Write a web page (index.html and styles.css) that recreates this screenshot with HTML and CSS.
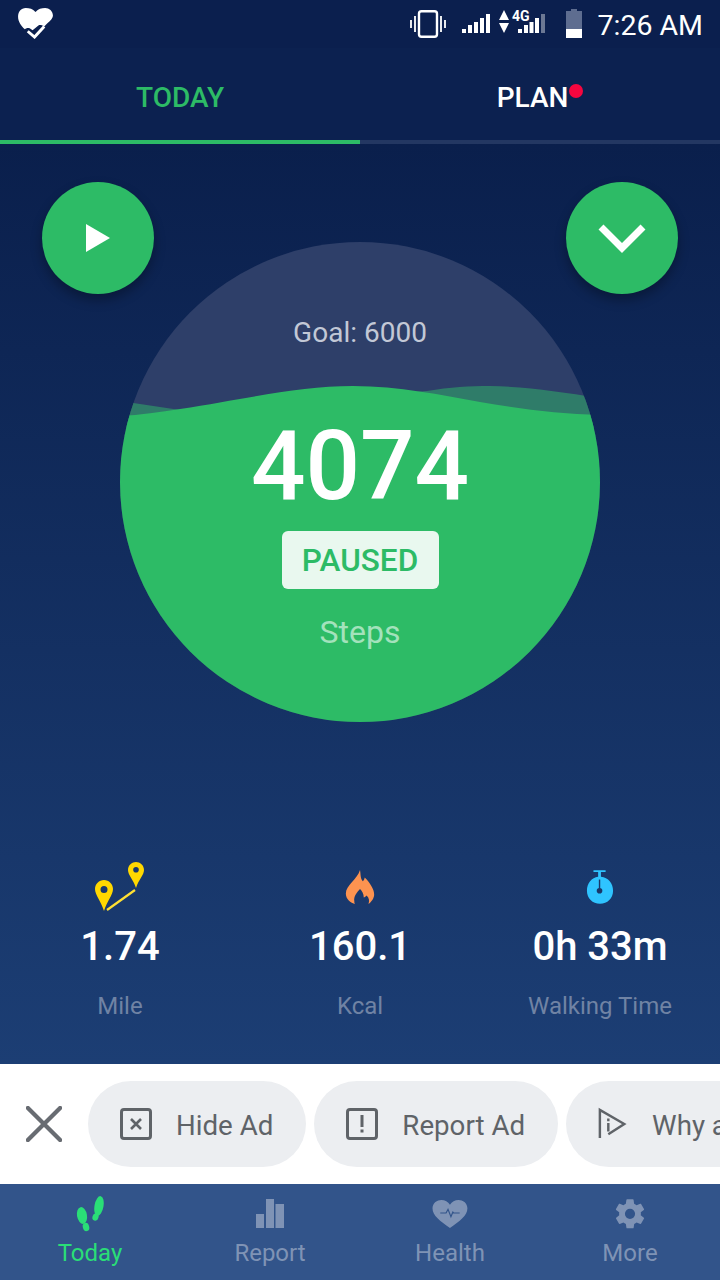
FILE: index.html
```html
<!DOCTYPE html>
<html lang="en">
<head>
<meta charset="utf-8">
<title>Today</title>
<link rel="stylesheet" href="styles.css">
</head>
<body>
<div class="app">
  <header class="status">
    <svg class="st-heart" viewBox="0 0 36 32"><path fill="#fff" d="M18 4C15 1 12 0 8 0 3 0 0 4 0 9c0 5 3 9 7 13 1-1 3-2 5-1l3 2 6-5c2-1 4 0 6 1l3-3C34 13 36 10 36 8 36 3 32 0 28 0 24 0 21 1 18 4z"/><path fill="none" stroke="#fff" stroke-width="3" d="M10 24l7 6 10-11"/></svg>
    <div class="st-right">
      <svg class="st-vib" viewBox="0 0 36 28"><rect x="9" y="1.200" width="18" height="25.600" rx="2.500" fill="none" stroke="#fff" stroke-width="2.400"/><path stroke="#fff" stroke-width="1.800" d="M5 6v16M1 10v8M31 6v16M35 10v8"/></svg>
      <svg class="st-sig" viewBox="0 0 28 19"><path fill="#fff" d="M0 15h4v4H0zM6 11h4v8H6zM12 8h4v11h-4zM18 4h4v15h-4zM24 0h4v19h-4z"/></svg>
      <svg class="st-net" viewBox="0 0 47 25"><path fill="#fff" d="M5 1l5 10H0zM0 14h10L5 24z"/><path fill="#fff" d="M19 20h4v4h-4zM25 16h4v8h-4zM30.500 13h4v11h-4z"/><path fill="#fff" d="M36 9h4v15h-4z"/><path fill="#fff" opacity=".4" d="M42 5h4v19h-4z"/><text class="st-4g" x="13" y="12">4G</text></svg>
      <svg class="st-bat" viewBox="0 0 16 29"><path fill="#5e6d90" d="M5 0h6v2h5v18H0V2h5z"/><rect y="20" width="16" height="9" fill="#fff"/></svg>
      <span class="st-time">7:26 AM</span>
    </div>
  </header>

  <nav class="tabs">
    <div class="tab tab-on"><span>TODAY</span></div>
    <div class="tab"><span class="plan">PLAN<i class="dot"></i></span></div>
  </nav>

  <main class="main">
    <div class="fabs">
      <button class="fab"><svg class="fab-play" viewBox="0 0 24 28"><path fill="#fff" d="M0 0l24 14L0 28z"/></svg></button>
      <button class="fab"><svg class="fab-down" viewBox="0 0 48 30"><path fill="none" stroke="#fff" stroke-width="7" d="M3 4l21 21L45 4"/></svg></button>
    </div>

    <section class="ring">
      <svg class="waves" viewBox="120 242 480 480">
        <path fill="#2f7c69" d="M120 401L180 410 427 391C450 387 470 386 490 386 530 387 560 392 600 398V430H120z"/>
        <path fill="#2dbb66" d="M120 416C140 415 160 412 180 409 250 398 300 386 353 386 400 386 440 395 480 402 520 409 560 414 600 415V722H120z"/>
      </svg>
      <p class="goal">Goal: 6000</p>
      <p class="count">4074</p>
      <span class="paused">PAUSED</span>
      <p class="steps">Steps</p>
    </section>

    <section class="stats">
      <div class="stat">
        <svg class="stat-ico" viewBox="-4 0 60 52"><path fill="#ffd800" fill-rule="evenodd" d="M10 18c5 0 9 4 9 9 0 6-6 12-9 22C7 39 1 33 1 27c0-5 4-9 9-9zm0 6a3.500 3.500 0 100 7 3.500 3.500 0 000-7z"/><path fill="#ffd800" fill-rule="evenodd" d="M42 0c4 0 8 3 8 8 0 5-5 9-8 18-3-9-8-13-8-18 0-5 4-8 8-8zm0 5a2.800 2.800 0 100 5.600A2.800 2.800 0 0042 5z"/><path stroke="#ffe033" stroke-width="2.200" d="M13 48l28-20"/></svg>
        <strong>1.74</strong><span>Mile</span>
      </div>
      <div class="stat">
        <svg class="stat-ico flame" viewBox="0 0 32 36"><path fill="#fd9350" d="M16 0c1 5 0 8 3 12 1-1 2-3 2-4 5 5 10 12 10 18 0 4-3 8-6 10 1-3 1-6-2-9-1 1-2 2-3 2 0-4-2-7-4-9-3 3-7 8-6 13 0 1 0 2 1 3-5-1-10-5-10-11C1 16 13 10 16 0z"/></svg>
        <strong>160.1</strong><span>Kcal</span>
      </div>
      <div class="stat">
        <svg class="stat-ico timer" viewBox="0 0 30 36"><path fill="#2fc4ff" d="M8 0h13v2h-5v5c8 1 13 7 13 15 0 8-6 14-14 14S1 30 1 22C1 14 6 8 13 7V2H8z"/><circle cx="14.500" cy="22" r="3" fill="#1a3768"/><path stroke="#1a3768" stroke-width="1.500" d="M14.500 10v12"/></svg>
        <strong>0h 33m</strong><span>Walking Time</span>
      </div>
    </section>
  </main>

  <aside class="ad">
    <svg class="ad-x" viewBox="0 0 38 38"><path stroke="#686c72" stroke-width="4.500" stroke-linecap="round" d="M2 2l34 34M36 2L2 36"/></svg>
    <div class="pill">
      <svg class="pill-ico" viewBox="0 0 32 32"><rect x="1.500" y="1.500" width="29" height="29" rx="2.500" fill="none" stroke="#5f6368" stroke-width="3"/><path stroke="#5f6368" stroke-width="2.600" d="M11 11l10 10M21 11L11 21"/></svg>
      <span>Hide Ad</span>
    </div>
    <div class="pill">
      <svg class="pill-ico" viewBox="0 0 32 32"><rect x="1.500" y="1.500" width="29" height="29" rx="2.500" fill="none" stroke="#5f6368" stroke-width="3"/><path fill="#5f6368" d="M14.500 7h3v12h-3zM14.500 21.500h3v3h-3z"/></svg>
      <span>Report Ad</span>
    </div>
    <div class="pill pill-cut">
      <svg class="pill-ico why" viewBox="0 0 32 34"><path fill="none" stroke="#5f6368" stroke-width="2.600" d="M2 32V2l26 15-17 11"/><path stroke="#5f6368" stroke-width="2.600" d="M11 16v9M11 11v3"/></svg>
      <span>Why a</span>
    </div>
  </aside>

  <footer class="nav">
    <div class="nav-item nav-on">
      <svg class="nav-ico" viewBox="0 0 36 36"><g fill="#2ade77"><ellipse cx="10" cy="19.500" rx="5" ry="8.500" transform="rotate(-10 10 19.500)"/><ellipse cx="14" cy="31" rx="3.200" ry="4.200" transform="rotate(-15 14 31)"/><ellipse cx="27" cy="10" rx="4.500" ry="10" transform="rotate(10 27 10)"/><ellipse cx="23.500" cy="21" rx="3" ry="3.800" transform="rotate(18 23.500 21)"/></g></svg>
      <span>Today</span>
    </div>
    <div class="nav-item">
      <svg class="nav-ico" viewBox="0 0 36 36"><path fill="#7f93b5" d="M4 18h8v14H4zM14 3h8v29h-8zM23.500 8H32v24h-8.500z"/></svg>
      <span>Report</span>
    </div>
    <div class="nav-item">
      <svg class="nav-ico" viewBox="0 0 36 36"><g transform="translate(.5 4) scale(.97 .93)"><path fill="#7f93b5" d="M18 30C8 23 0 17 0 9 0 3 5 0 9 0c4 0 7 2 9 5 2-3 5-5 9-5 4 0 9 3 9 9 0 8-8 14-18 21z"/><path fill="none" stroke="#32548a" stroke-width="1.200" d="M8 14h6l2-4 3 8 2-5 1 1h6"/></g></svg>
      <span>Health</span>
    </div>
    <div class="nav-item">
      <svg class="nav-ico" viewBox="0 0 36 36"><g transform="translate(.6 .4) scale(1.450)"><path fill="#7f93b5" d="M19.400 13c.04-.3.1-.7.1-1s-.03-.7-.08-1l2.100-1.650c.2-.15.25-.43.12-.65l-2-3.450c-.12-.22-.39-.3-.6-.22l-2.500 1c-.5-.4-1.100-.7-1.700-1l-.38-2.650A.5.500 0 0014 2h-4a.5.500 0 00-.5.420l-.37 2.650c-.6.250-1.200.6-1.700 1l-2.500-1c-.22-.08-.48 0-.6.220l-2 3.450c-.13.220-.07.5.120.650L4.570 11c-.05.3-.07.7-.07 1s.02.7.07 1l-2.100 1.650c-.2.15-.25.430-.12.650l2 3.450c.12.220.39.3.6.220l2.500-1c.5.4 1.100.7 1.700 1l.37 2.650c.04.240.25.420.5.420h4c.25 0 .46-.18.500-.42l.37-2.650c.6-.25 1.200-.6 1.700-1l2.500 1c.22.08.48 0 .6-.22l2-3.450c.12-.22.07-.5-.12-.65zM12 15.500a3.500 3.500 0 110-7 3.500 3.500 0 010 7z"/></g></svg>
      <span>More</span>
    </div>
  </footer>
</div>
</body>
</html>
```
FILE: styles.css
```css
* { box-sizing: border-box; }
html, body { margin: 0; padding: 0; }
body { font-family: Roboto, "Noto Sans", sans-serif; background: #0a1f4d; }
p { margin: 0; }
.app { width: 720px; height: 1280px; display: flex; flex-direction: column; overflow: hidden; }

.status { height: 48px; background: #0b1f4e; display: flex; align-items: flex-start; justify-content: space-between; padding: 8px 17px 0 18px; }
.st-heart { width: 35px; height: 31px; }
.st-right { display: flex; align-items: flex-start; }
.st-vib { width: 36px; height: 28px; margin-top: 2px; }
.st-sig { width: 28px; height: 19px; margin: 6px 0 0 16px; }
.st-net { width: 47px; height: 25px; margin: 1px 0 0 9px; }
.st-4g { font: 700 14px Roboto, sans-serif; fill: #fff; }
.st-bat { width: 16px; height: 29px; margin: 1px 0 0 20px; }
.st-time { font-size: 28.5px; color: #fff; margin: 1px 0 0 16px; line-height: 34px; }

.tabs { height: 96px; display: flex; background: #0c2150; }
.tab { flex: 1; display: flex; align-items: center; justify-content: center; font-size: 28px; font-weight: 500; color: #fff; border-bottom: 4px solid #233762; padding-top: 6px; }
.tab-on { color: #2dbb66; border-bottom-color: #2dbb66; }
.plan { display: flex; align-items: flex-start; }
.dot { width: 14px; height: 14px; margin: 3px 0 0 1px; border-radius: 50%; background: #f5063f; }

.main { height: 920px; background: linear-gradient(180deg, #0a1f4c 0%, #1c3e74 100%); display: flex; flex-direction: column; }
.fabs { display: flex; justify-content: space-between; padding: 38px 42px 0; position: relative; z-index: 2; }
.fab { width: 112px; height: 112px; border: 0; padding: 0; border-radius: 50%; background: #2dbb66; box-shadow: 0 6px 12px rgba(0, 0, 0, .3); display: flex; align-items: center; justify-content: center; }
.fab-play { width: 24px; height: 28px; }
.fab-down { width: 48px; height: 30px; }

.ring { position: relative; width: 480px; height: 480px; margin: -52px auto 0; border-radius: 50%; overflow: hidden; background: #2e3f69; display: flex; flex-direction: column; align-items: center; }
.waves { position: absolute; inset: 0; width: 480px; height: 480px; }
.goal, .count, .paused, .steps { position: relative; }
.goal { font-size: 28px; line-height: 32px; color: #c2c8d6; margin-top: 75px; }
.count { font-size: 96px; font-weight: 500; line-height: 112px; color: #fff; margin-top: 61px; }
.paused { width: 157px; height: 58px; margin-top: 9px; border-radius: 6px; background: #e9f8ef; color: #2dbb66; font-size: 31.5px; font-weight: 500; display: flex; align-items: center; justify-content: center; }
.steps { font-size: 32px; line-height: 36px; color: #a3e2bc; margin-top: 25px; }

.stats { display: grid; grid-template-columns: repeat(3, 240px); margin-top: 140px; }
.stat { display: flex; flex-direction: column; align-items: center; }
.stat-ico { width: 60px; height: 52px; }
.stat-ico.flame { width: 32px; height: 34px; margin: 8px 0 10px; }
.stat-ico.timer { width: 28px; height: 34px; margin: 8px 0 10px; }
.stat strong { font-size: 40px; font-weight: 500; color: #fff; line-height: 44px; margin-top: 11px; }
.stat span { font-size: 24px; line-height: 28px; color: #7083a4; margin-top: 23px; }

.ad { height: 120px; background: #fff; display: flex; align-items: center; padding-left: 26px; gap: 8px; overflow: hidden; }
.ad-x { width: 36px; height: 36px; flex: none; margin-right: 18px; }
.pill { flex: none; height: 86px; padding: 0 33px 0 32px; border-radius: 43px; background: #eceef1; display: flex; align-items: center; gap: 24px; font-size: 27.7px; color: #5f6368; }
.pill span { padding-top: 2px; }
.pill-ico { width: 32px; height: 32px; flex: none; }
.pill-ico.why { width: 30px; height: 34px; }
.pill-cut { padding-right: 60px; }

.nav { height: 96px; background: #32548a; display: grid; grid-template-columns: repeat(4, 180px); }
.nav-item { display: flex; flex-direction: column; align-items: center; font-size: 24px; color: #7f93b5; padding-top: 12px; }
.nav-ico { height: 36px; width: 36px; }
.nav-item span { line-height: 28px; margin-top: 7px; }
.nav-on { color: #2ade77; }
```
